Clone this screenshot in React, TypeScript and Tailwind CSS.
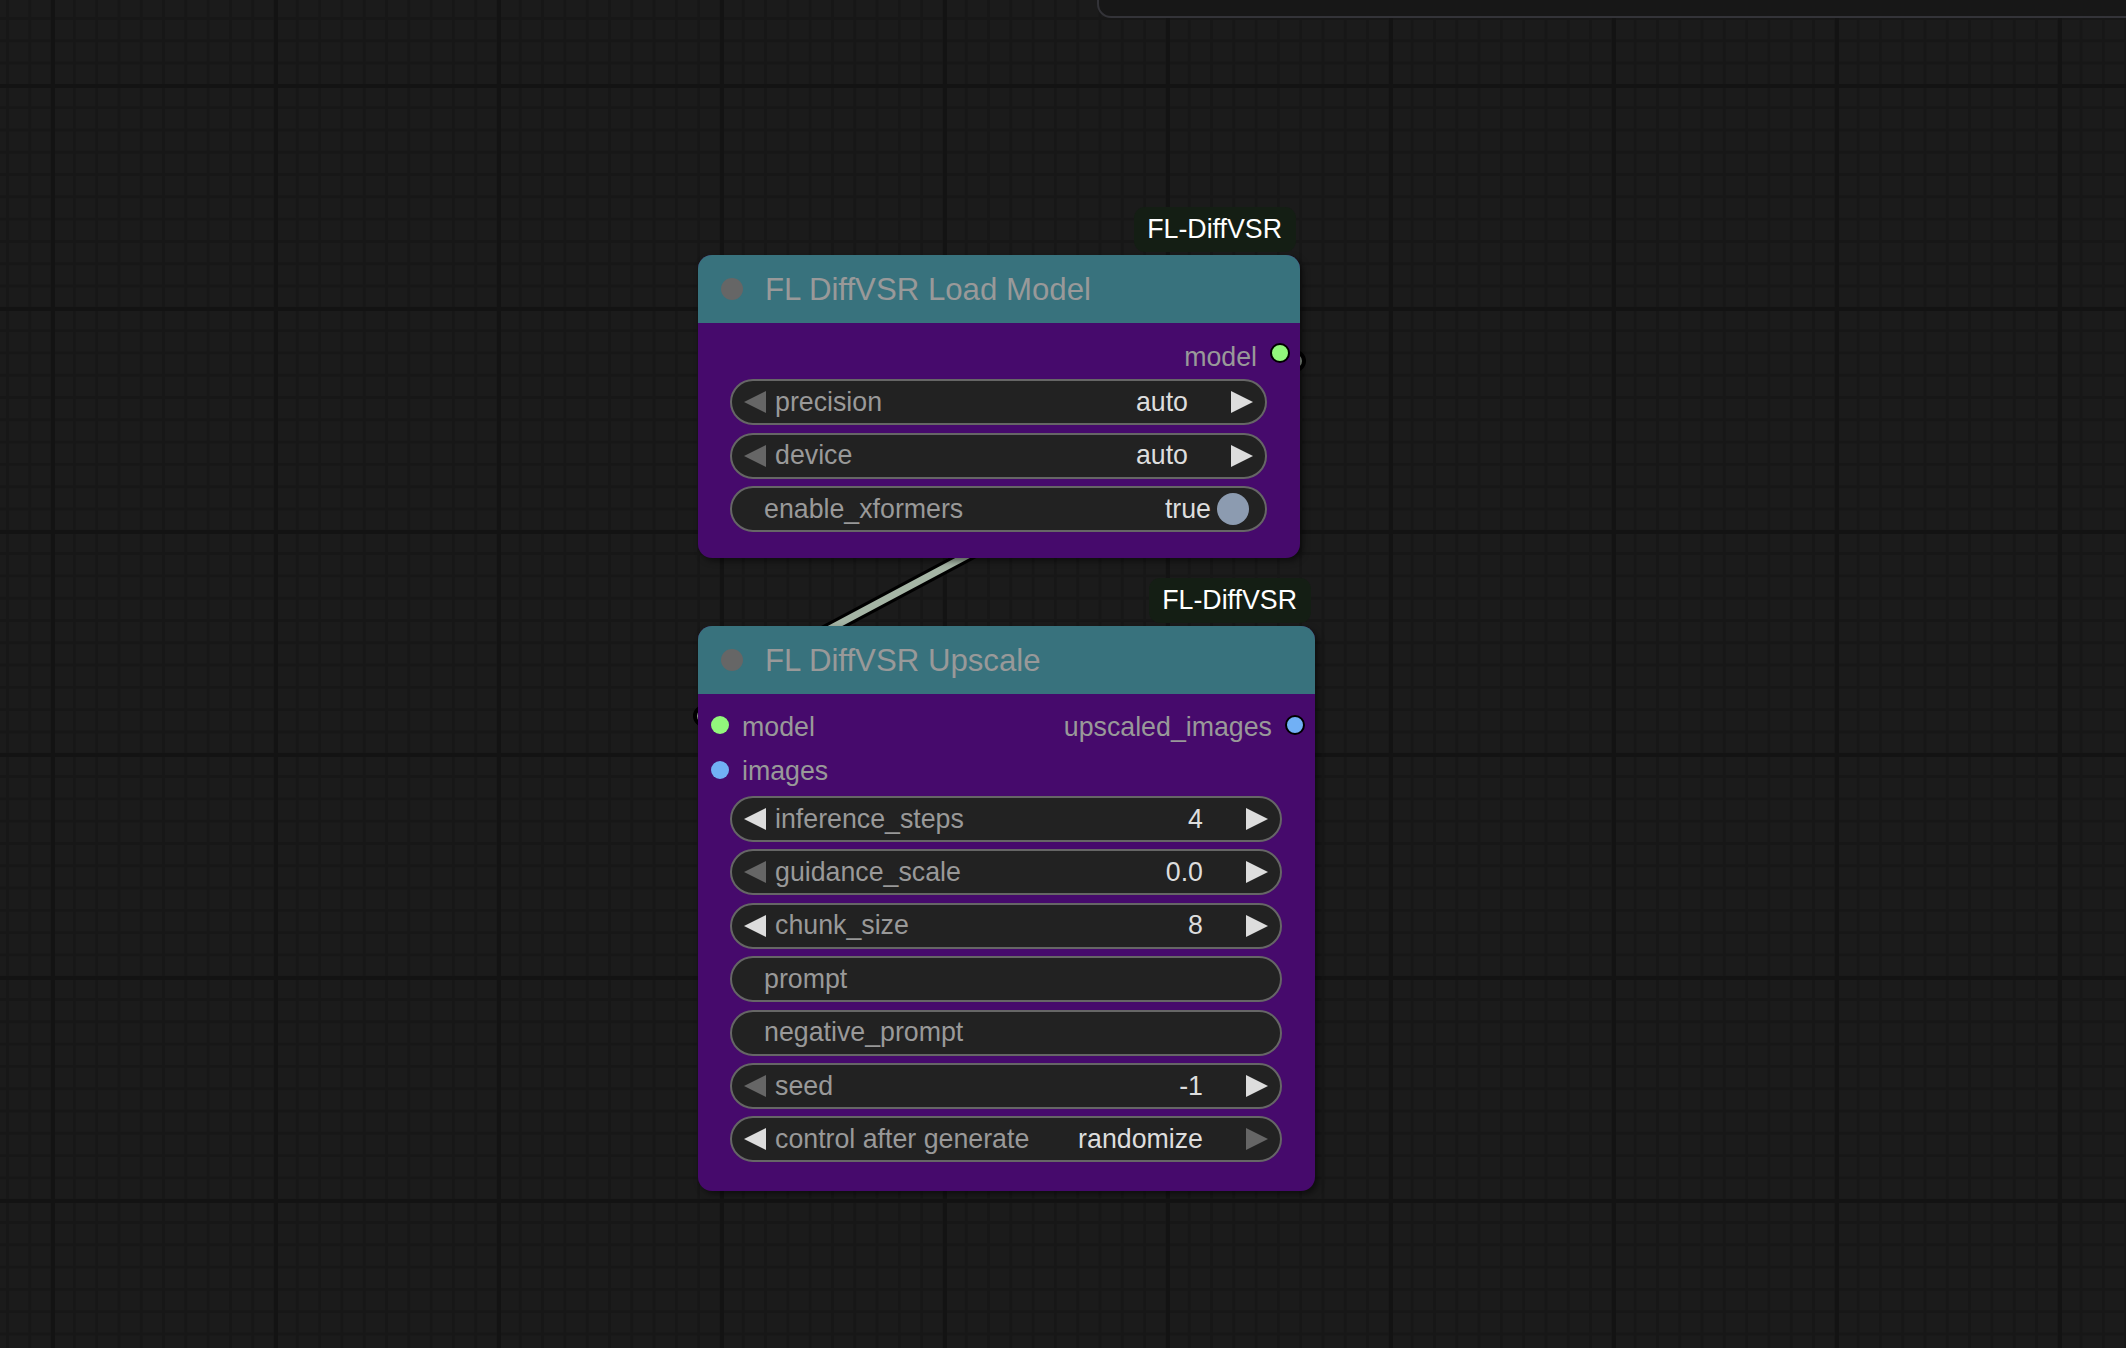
const font = "font-['Liberation_Sans',Arial,sans-serif]";

function Arrow({ dir, on }: { dir: "left" | "right"; on: boolean }) {
  return (
    <svg width="22" height="22" viewBox="0 0 22 22" className="shrink-0">
      <polygon points={dir === "left" ? "22,0 22,22 0,11" : "0,0 0,22 22,11"} fill={on ? "#dddddd" : "#666666"} />
    </svg>
  );
}

function NumberWidget({ label, value, left = true, right = true }: { label: string; value: string; left?: boolean; right?: boolean }) {
  return (
    <div className="flex h-[46px] items-center rounded-full border-2 border-[#666666] bg-[#222222] pl-[12px] pr-[12px]">
      <Arrow dir="left" on={left} />
      <span className="ml-[9px] text-[#999999]">{label}</span>
      <span className="ml-auto mr-[43px] text-[#dddddd]">{value}</span>
      <Arrow dir="right" on={right} />
    </div>
  );
}

function TextWidget({ label }: { label: string }) {
  return (
    <div className="flex h-[46px] items-center rounded-full border-2 border-[#666666] bg-[#222222] pl-[32px]">
      <span className="text-[#999999]">{label}</span>
    </div>
  );
}

function Toggle({ label, value }: { label: string; value: string }) {
  return (
    <div className="flex h-[46px] items-center rounded-full border-2 border-[#666666] bg-[#222222] pl-[32px] pr-[16px]">
      <span className="text-[#999999]">{label}</span>
      <span className="ml-auto mr-[6px] text-[#dddddd]">{value}</span>
      <div className="h-[32px] w-[32px] rounded-full bg-[#8c9bb0]" />
    </div>
  );
}

function Dot({ color, ring, className = "" }: { color: string; ring?: boolean; className?: string }) {
  return (
    <div
      className={`${ring ? "h-[20px] w-[20px] border-2 border-black" : "h-[18px] w-[18px]"} shrink-0 rounded-full ${className}`}
      style={{ backgroundColor: color }}
    />
  );
}

function Node({ title, tag, className, children }: { title: string; tag: string; className: string; children: React.ReactNode }) {
  return (
    <div className={`absolute left-[697.5px] ${className} rounded-[14px] bg-[#460a6c] text-[26.76px] leading-none shadow-[3px_3px_6px_rgba(0,0,0,0.5)]`}>
      <div className="absolute right-[4px] top-[-48px] rounded-[11px] bg-[#141e14] pb-[9px] pl-[13px] pr-[14px] pt-[9px] text-white">{tag}</div>
      <div className="flex h-[67.5px] items-center gap-[22.5px] rounded-t-[14px] bg-[#38727d] pl-[23px] text-[31.2px] text-[#999999]">
        <div className="h-[22px] w-[22px] rounded-full bg-[#666666]" />
        <span className="pt-[2px]">{title}</span>
      </div>
      {children}
    </div>
  );
}

export default function App() {
  return (
    <div
      className={`${font} relative h-[1348px] w-[2126px] overflow-hidden bg-[#1b1b1b] bg-[linear-gradient(to_right,#131313_4px,transparent_4px),linear-gradient(to_bottom,#131313_4px,transparent_4px),linear-gradient(to_right,#171717_3px,transparent_3px),linear-gradient(to_bottom,#171717_3px,transparent_3px)] bg-[size:223px_223px,223px_223px,22.3px_22.3px,22.3px_22.3px] bg-[position:51px_0,0_84px,6px_0,0_17px]`}
    >
      <div className="absolute left-[1097px] right-[-20px] top-[-20px] h-[38px] rounded-[14px] border-2 border-[#333338] bg-[#171717]" />

      <svg className="absolute inset-0" width="2126" height="1348" viewBox="0 0 2126 1348">
        <circle cx="1295" cy="361" r="9" fill="#9aa69a" stroke="#000" strokeWidth="4" />
        <circle cx="704" cy="716" r="9" fill="#9aa69a" stroke="#000" strokeWidth="4" />
        <line x1="1000" y1="538" x2="790" y2="650" stroke="#000" strokeWidth="13" />
        <line x1="1000" y1="538" x2="790" y2="650" stroke="#a5b5a5" strokeWidth="7" />
      </svg>

      <Node title="FL DiffVSR Load Model" tag="FL-DiffVSR" className="top-[255px] h-[303px] w-[602.5px]">
        <div className="flex h-[56.5px] items-center justify-end gap-[13px] pr-[10px] pt-[9px]">
          <span className="pt-[4px] text-[#999999]">model</span>
          <Dot color="#92f77c" ring className="mb-[4px]" />
        </div>
        <div className="flex flex-col gap-[7.5px] pl-[32.5px] pr-[33px]">
          <NumberWidget label="precision" value="auto" left={false} />
          <NumberWidget label="device" value="auto" left={false} />
          <Toggle label="enable_xformers" value="true" />
        </div>
      </Node>

      <Node title="FL DiffVSR Upscale" tag="FL-DiffVSR" className="top-[626px] h-[565px] w-[617.5px]">
        <div className="flex h-[44px] items-center pl-[13.5px] pr-[10px] pt-[20px]">
          <Dot color="#92f77c" className="mb-[1px]" />
          <span className="ml-[13px] pt-[3px] text-[#999999]">model</span>
          <span className="ml-auto mr-[13px] pt-[3px] text-[#999999]">upscaled_images</span>
          <Dot color="#71b0f5" ring className="mb-[2px]" />
        </div>
        <div className="flex h-[44px] items-center pl-[13.5px] pt-[20px]">
          <Dot color="#71b0f5" />
          <span className="ml-[13px] pt-[3px] text-[#999999]">images</span>
        </div>
        <div className="mt-[14.5px] flex flex-col gap-[7.4px] pl-[32.5px] pr-[33px]">
          <NumberWidget label="inference_steps" value="4" />
          <NumberWidget label="guidance_scale" value="0.0" left={false} />
          <NumberWidget label="chunk_size" value="8" />
          <TextWidget label="prompt" />
          <TextWidget label="negative_prompt" />
          <NumberWidget label="seed" value="-1" left={false} />
          <NumberWidget label="control after generate" value="randomize" right={false} />
        </div>
      </Node>
    </div>
  );
}
